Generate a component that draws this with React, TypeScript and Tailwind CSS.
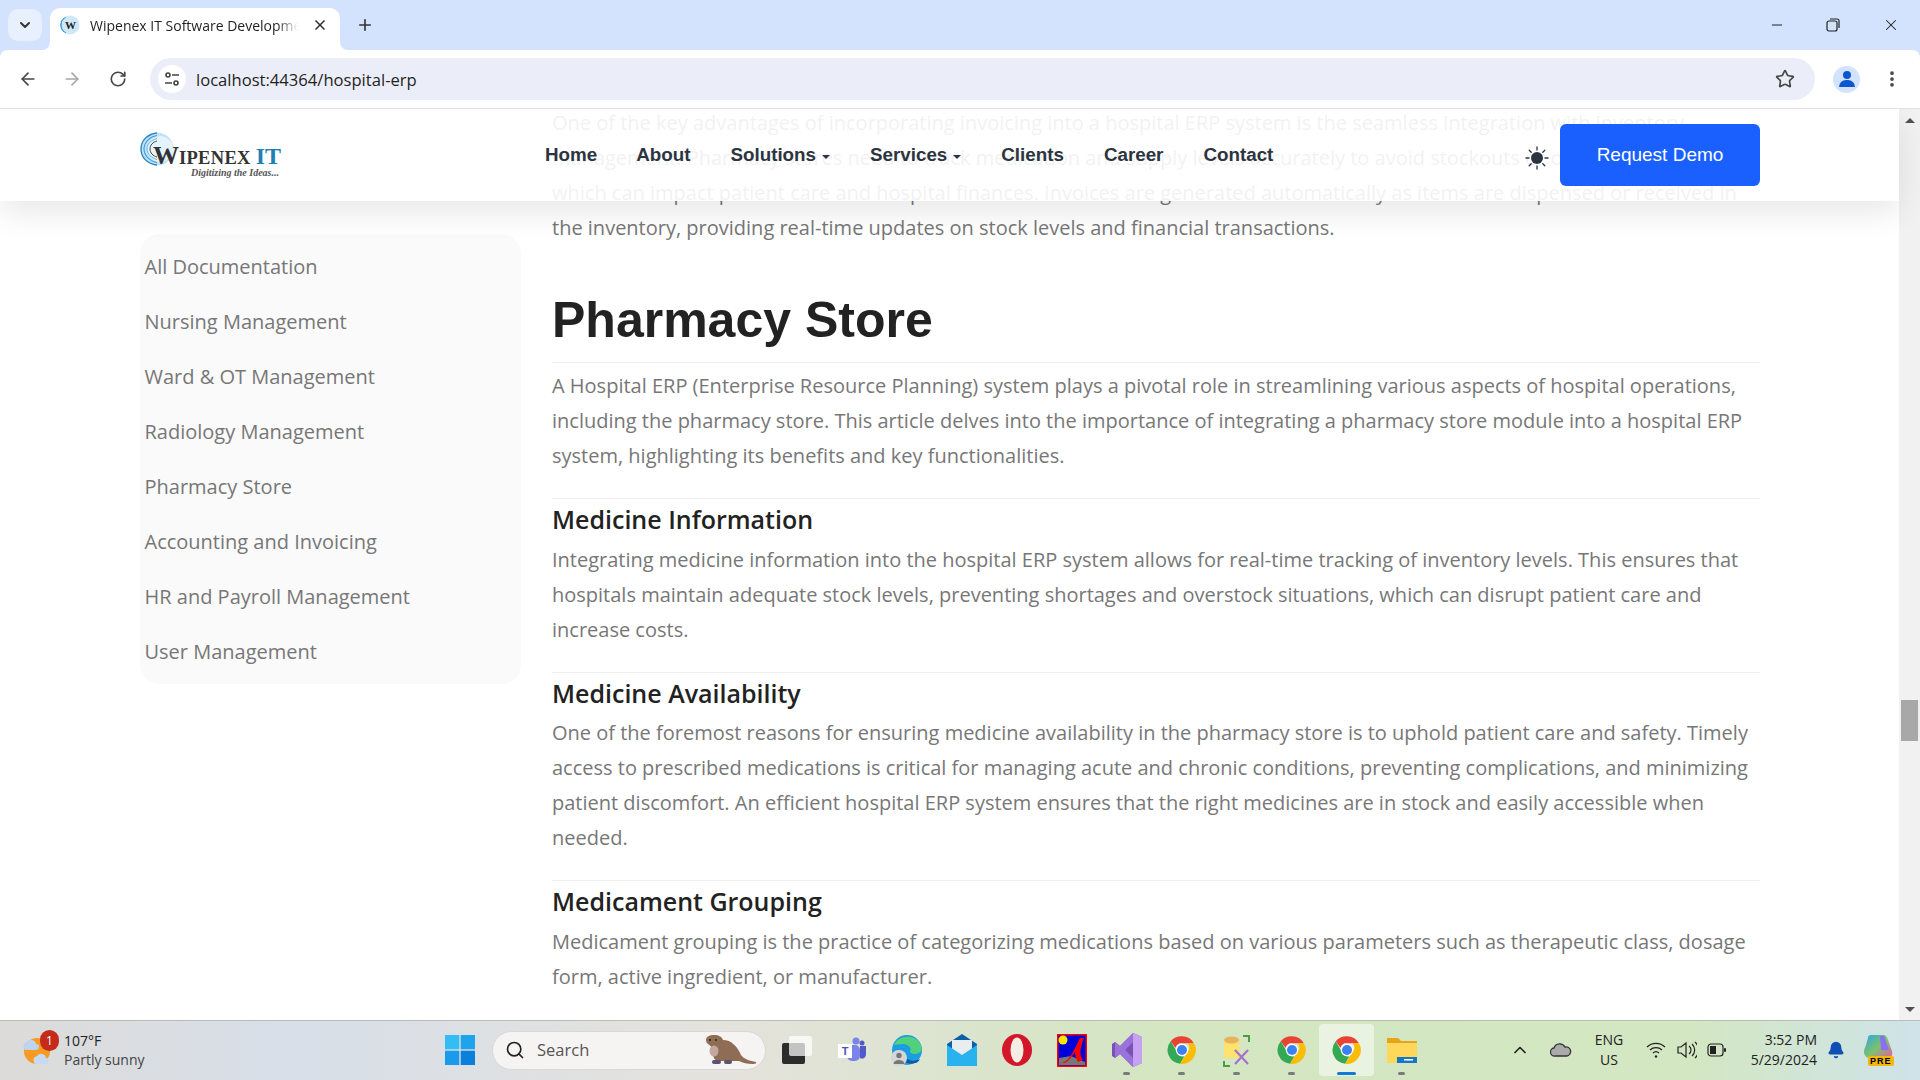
import { ArrowLeft, ArrowRight, RotateCw, Star, X, Plus, ChevronDown, Search, Minus, EllipsisVertical, ChevronUp, Bell } from "lucide-react";

const sideLinks = [
  "All Documentation",
  "Nursing Management",
  "Ward & OT Management",
  "Radiology Management",
  "Pharmacy Store",
  "Accounting and Invoicing",
  "HR and Payroll Management",
  "User Management",
];

const sections = [
  {
    title: "Medicine Information",
    text: "Integrating medicine information into the hospital ERP system allows for real-time tracking of inventory levels. This ensures that hospitals maintain adequate stock levels, preventing shortages and overstock situations, which can disrupt patient care and increase costs.",
  },
  {
    title: "Medicine Availability",
    text: "One of the foremost reasons for ensuring medicine availability in the pharmacy store is to uphold patient care and safety. Timely access to prescribed medications is critical for managing acute and chronic conditions, preventing complications, and minimizing patient discomfort. An efficient hospital ERP system ensures that the right medicines are in stock and easily accessible when needed.",
  },
  {
    title: "Medicament Grouping",
    text: "Medicament grouping is the practice of categorizing medications based on various parameters such as therapeutic class, dosage form, active ingredient, or manufacturer.",
  },
];

function Chrome({ size = 30 }: { size?: number }) {
  return (
    <svg width={size} height={size} viewBox="0 0 48 48">
      <path d="M24 2a22 22 0 0 1 19 11H24a11 11 0 0 0-10.5 7.5L6 10A22 22 0 0 1 24 2z" fill="#ea4335" />
      <path d="M6 10l9.5 16.5a11 11 0 0 0 12 8L21 46A22 22 0 0 1 6 10z" fill="#34a853" />
      <path d="M43 13a22 22 0 0 1-22 33l10-16.500A11 11 0 0 0 33 13z" fill="#fbbc04" />
      <circle cx="24" cy="24" r="10" fill="#fff" />
      <circle cx="24" cy="24" r="8" fill="#3b82f0" />
    </svg>
  );
}

function Favicon() {
  return (
    <svg width="20" height="20" viewBox="0 0 20 20">
      <circle cx="10" cy="10" r="9.500" fill="#cfe8f8" />
      <path d="M6 2a9 9 0 0 0 0 16M4 3a9 9 0 0 0 0 14" stroke="#3f9bd6" fill="none" />
      <text x="10.500" y="14" textAnchor="middle" fontSize="11" fontWeight="700" fontFamily="'Liberation Serif', serif" fill="#222">W</text>
    </svg>
  );
}

function Logo() {
  return (
    <div className="relative w-[142px] h-[46px] shrink-0">
      <svg width="34" height="34" viewBox="0 0 34 34" className="absolute left-0 top-0">
        <circle cx="17" cy="17" r="16.500" fill="#bfe2f8" />
        <circle cx="20" cy="17" r="13" fill="#e4f3fc" />
        <path d="M17 1C7 2 1 9 1 17s6 15 16 16" stroke="#2b84bd" strokeWidth="1.300" fill="none" />
        <path d="M17 3.500C9 5 4 11 4 17s5 12 13 13.500" stroke="#3f9bd6" strokeWidth="1.100" fill="none" />
        <path d="M17 6.500C11 8 7 12 7 17s4 9 10 10.500" stroke="#66b5e6" strokeWidth="1" fill="none" />
        <path d="M17 9c-4 1-7 4-7 8s3 7 7 8" stroke="#444" strokeWidth="1" fill="none" />
      </svg>
      <div className="absolute left-[13px] top-[11px] whitespace-nowrap font-['Liberation_Serif',serif] font-bold text-[#333] leading-[26px]">
        <span className="text-[26px]">W</span>
        <span className="text-[18.500px] tracking-[0.3px]">IPENEX </span>
        <span className="text-[24px] text-[#1f7fb5]">IT</span>
      </div>
      <div className="absolute right-[3px] top-[36px] whitespace-nowrap font-['Liberation_Serif',serif] italic font-bold text-[10px] leading-[10px] text-[#555]">
        Digitizing the Ideas...
      </div>
    </div>
  );
}

function NavItem({ label, caret }: { label: string; caret?: boolean }) {
  return (
    <span className="flex items-center gap-[6px] text-[18.800px] font-bold text-[#2b3440] whitespace-nowrap font-['Liberation_Sans',sans-serif]">
      {label}
      {caret && <span className="mt-[3px] border-x-[4.500px] border-t-[4px] border-x-transparent border-t-[#2b3440]" />}
    </span>
  );
}

function Sun() {
  return (
    <svg width="24" height="24" viewBox="0 0 24 24" stroke="#2b3440" strokeWidth="1.300" strokeLinecap="round">
      <circle cx="12" cy="12" r="6" fill="#2b3440" stroke="none" />
      <path d="M12 1v3M12 20v3M1 12h3M20 12h3M4.200 4.200l2 2M17.800 17.800l2 2M4.200 19.800l2-2M17.800 6.200l2-2" />
    </svg>
  );
}

function Teams() {
  return (
    <svg width="30" height="30" viewBox="0 0 30 30">
      <circle cx="19" cy="6" r="3.500" fill="#7b83eb" />
      <circle cx="25" cy="8" r="2.500" fill="#5059c9" />
      <rect x="10" y="10" width="13" height="16" rx="5" fill="#7b83eb" />
      <path d="M23 11h6v8a4 4 0 0 1-6 4z" fill="#5059c9" />
      <rect x="1" y="9" width="14" height="14" fill="#fff" />
      <text x="8" y="20" textAnchor="middle" fontSize="11" fontWeight="700" fontFamily="'Liberation Sans', sans-serif" fill="#4b53bc">T</text>
    </svg>
  );
}

function Edge() {
  return (
    <svg width="32" height="34" viewBox="0 0 32 34">
      <circle cx="16" cy="17" r="15" fill="#1b9de2" />
      <path d="M3 12C6 3 24-1 30 12c2 5-1 9-6 9-3 0-5-1-5-3 2-3-2-7-7-7-4 0-7 1-9 1z" fill="#52d17c" />
      <path d="M9 24c3 5 9 8 15 6 2 0 4-2 5-4-6 3-12 2-16-3z" fill="#0c59a4" />
      <circle cx="8" cy="25" r="8" fill="#d6d6d6" />
      <circle cx="8" cy="22.500" r="2.700" fill="#777" />
      <path d="M2.500 31a5.500 4 0 0 1 11 0z" fill="#777" />
    </svg>
  );
}

function Mail() {
  return (
    <svg width="30" height="32" viewBox="0 0 30 32">
      <path d="M15 0l15 10v22H0V10z" fill="#0f5ea8" />
      <path d="M5 6h20v10l-10 6-10-6z" fill="#e8edf2" />
      <path d="M0 11l15 10 15-10v21H0z" fill="#29b3ee" />
    </svg>
  );
}

function Opera() {
  return (
    <svg width="30" height="32" viewBox="0 0 30 32">
      <ellipse cx="15" cy="16" rx="15" ry="16" fill="#d3162a" />
      <ellipse cx="15" cy="16" rx="6.500" ry="12.500" fill="#f4eee2" />
    </svg>
  );
}

function XApp() {
  return (
    <svg width="30" height="33" viewBox="0 0 30 33">
      <rect x="0" y="0" width="30" height="33" fill="#f00" />
      <rect x="1.500" y="1.500" width="27" height="30" fill="#0000d8" />
      <circle cx="6" cy="6" r="4.500" fill="#ffe600" />
      <path d="M2 24l12-2 14 6v3H2z" fill="#777" />
      <path d="M5 29c8-2 13-15 18-25l4 0c-4 10-5 17-1 22l-5 2c-2-3-3-7-3-10-3 4-6 9-10 11z" fill="#f00" />
    </svg>
  );
}

function VisualStudio() {
  return (
    <svg width="30" height="34" viewBox="0 0 30 34">
      <path d="M21 0l9 4v26l-9 4-13-13-5 4-3-2V11l3-2 5 4z" fill="#7a52b3" />
      <path d="M21 0l9 4v26l-9 4z" fill="#c7a2f2" />
      <path d="M21 0v34L8 21l-5 4V9l5 4zM21 9l-8 8 8 8z" fill="#9b72dc" fillRule="evenodd" />
    </svg>
  );
}

function Tool() {
  return (
    <svg width="30" height="33" viewBox="0 0 30 33">
      <path d="M2 7c0-5 15-5 15 0v17H2z" fill="#ffe36e" />
      <ellipse cx="9.500" cy="6" rx="7.500" ry="3.500" fill="#e8b35c" />
      <path d="M21 2h6v6M2 27v5h6" stroke="#4a9c46" strokeWidth="2" fill="none" />
      <path d="M13 16l13 14M26 16L13 30" stroke="#a472c8" strokeWidth="2.200" />
    </svg>
  );
}

function Folder() {
  return (
    <svg width="32" height="28" viewBox="0 0 32 28">
      <path d="M1 2h11l3 3h16v21H1z" fill="#e5a51a" />
      <rect x="1" y="7" width="30" height="20" fill="#ffd75a" />
      <path d="M11 27v-6h20v6z" fill="#1478c8" />
      <rect x="18" y="23" width="9" height="1.500" fill="#fff" />
    </svg>
  );
}

function TaskIcon({ children, dot, active }: { children: React.ReactNode; dot?: boolean; active?: boolean }) {
  return (
    <div className={"relative w-[55px] h-[52px] flex items-center justify-center rounded-[4px] shrink-0 " + (active ? "bg-white/50" : "")}>
      {children}
      {dot && <span className="absolute bottom-[1px] left-[24px] w-[7px] h-[3px] rounded-full bg-[#7b7b7b]" />}
      {active && <span className="absolute bottom-[1px] left-[18px] w-[19px] h-[3px] rounded-full bg-[#0f7bd6]" />}
    </div>
  );
}

function Otter() {
  return (
    <svg width="52" height="30" viewBox="0 0 52 30">
      <path d="M1 5c0-3 3-5 8-5s8 2 9 5c8 0 14 6 18 15 3 4 9 6 15 7 1 1-1 2-3 2-6 0-10-1-14-3H14c-4 0-6-3-6-8 0-4-1-6-5-9-1-1-2-2-2-4z" fill="#8f6d55" />
      <circle cx="5" cy="5" r="1" fill="#222" />
      <circle cx="11" cy="5" r="1" fill="#222" />
      <ellipse cx="9" cy="16" rx="4.500" ry="5.500" fill="#c4a8a0" />
      <rect x="7" y="25" width="9" height="4" rx="2" fill="#5a5470" />
      <rect x="19" y="25" width="8" height="4" rx="2" fill="#5a5470" />
    </svg>
  );
}

function Weather() {
  return (
    <svg width="36" height="36" viewBox="0 0 36 36">
      <circle cx="15" cy="19" r="13" fill="#f59a23" />
      <path d="M2 16a4 4 0 0 1 3-6 5 5 0 0 1 9 2 3 3 0 0 1 0 6H4a2 2 0 0 1-2-2z" fill="#bcd4ee" />
      <path d="M12 30a4 4 0 0 1 3-6 5 5 0 0 1 9 2 3 3 0 0 1 0 6H14a2 2 0 0 1-2-2z" fill="#c6dbf2" />
    </svg>
  );
}

function Copilot() {
  return (
    <div className="relative w-[32px] h-[32px]">
      <svg width="32" height="28" viewBox="0 0 32 28">
        <defs>
          <linearGradient id="cp" x1="0" y1="0" x2="1" y2="1">
            <stop offset="0" stopColor="#2aa6e8" />
            <stop offset=".5" stopColor="#7ec26a" />
            <stop offset="1" stopColor="#e85aa8" />
          </linearGradient>
        </defs>
        <path d="M9 1h12c3 0 4 2 5 5l4 11c1 4-1 8-5 8H10c-4 0-8-3-8-7 0-3 1-4 2-7l2-7c0-2 1-3 3-3z" fill="url(#cp)" />
        <path d="M18 2h4l5 14h-8z" fill="#8a6ff0" />
      </svg>
      <span className="absolute left-[6px] bottom-0 px-[2px] rounded-[2px] bg-[#f5b70f] text-[9px] leading-[10px] font-bold tracking-[1px] text-black font-['Liberation_Sans',sans-serif]">PRE</span>
    </div>
  );
}

export default function App() {
  return (
    <div className="w-[1920px] h-[1080px] overflow-hidden flex flex-col font-['Open_Sans',sans-serif] bg-white">
      {/* tab strip */}
      <div className="h-[50px] shrink-0 bg-[#d3e3fd] flex items-start">
        <div className="ml-[8px] mt-[9px] w-[34px] h-[32px] rounded-[10px] bg-[#e8effd] flex items-center justify-center">
          <ChevronDown size={16} strokeWidth={3} className="text-[#333]" />
        </div>
        <div className="relative ml-[8px] mt-[8px] w-[290px] h-[42px] rounded-t-[10px] bg-white flex items-center pl-[10px] pb-[8px]">
          <span className="absolute -left-[8px] bottom-0 w-[8px] h-[8px] bg-white">
            <span className="block w-[8px] h-[8px] rounded-br-[8px] bg-[#d3e3fd]" />
          </span>
          <span className="absolute -right-[8px] bottom-0 w-[8px] h-[8px] bg-white">
            <span className="block w-[8px] h-[8px] rounded-bl-[8px] bg-[#d3e3fd]" />
          </span>
          <Favicon />
          <span className="ml-[10px] w-[208px] overflow-hidden whitespace-nowrap text-[14px] text-[#1f1f1f] [mask-image:linear-gradient(to_right,black_90%,transparent)]">
            Wipenex IT Software Development
          </span>
          <X size={16} strokeWidth={2.500} className="ml-[14px] text-[#333]" />
        </div>
        <Plus size={18} strokeWidth={2.200} className="ml-[16px] mt-[16px] text-[#333]" />
        <div className="ml-auto flex items-center mt-[16px] text-[#222]">
          <Minus size={16} strokeWidth={1.500} />
          <svg width="14" height="14" viewBox="0 0 14 14" fill="none" stroke="#222" strokeWidth="1.200" className="ml-[41px]">
            <rect x="1" y="3" width="10" height="10" rx="2" />
            <path d="M4 1h7a2 2 0 0 1 2 2v7" />
          </svg>
          <X size={18} strokeWidth={1.400} className="ml-[42px] mr-[20px]" />
        </div>
      </div>

      {/* toolbar */}
      <div className="shrink-0 bg-[#d3e3fd]">
        <div className="h-[59px] bg-white border-b border-[#e2e2e2] flex items-center rounded-t-[8px]">
          <ArrowLeft size={20} strokeWidth={2} className="ml-[18px] text-[#474747]" />
          <ArrowRight size={20} strokeWidth={2} className="ml-[24px] text-[#a8a8a8]" />
          <RotateCw size={18} strokeWidth={2.200} className="ml-[27px] text-[#474747]" />
          <div className="ml-[23px] w-[1665px] h-[42px] rounded-full bg-[#ebeef8] flex items-center pl-[8px] pr-[20px]">
            <div className="w-[28px] h-[28px] rounded-full bg-white flex items-center justify-center">
              <svg width="16" height="16" viewBox="0 0 16 16" fill="none" stroke="#444" strokeWidth="1.600">
                <circle cx="4" cy="4" r="2" />
                <path d="M8 4h7M1 12h7" />
                <circle cx="12" cy="12" r="2" />
              </svg>
            </div>
            <span className="ml-[10px] text-[16.600px] text-[#1f1f1f] translate-y-[1px]">localhost:44364/hospital-erp</span>
            <Star size={20} strokeWidth={2} className="ml-auto text-[#474747]" />
          </div>
          <div className="ml-[18px] w-[27px] h-[27px] rounded-full bg-[#d3e3fd] flex flex-col items-center justify-center">
            <span className="w-[8px] h-[8px] rounded-full bg-[#0b57d0]" />
            <span className="mt-[1px] w-[16px] h-[7px] rounded-t-[7px] bg-[#0b57d0]" />
          </div>
          <EllipsisVertical size={20} strokeWidth={2.500} className="ml-[22px] text-[#474747]" />
        </div>
      </div>

      {/* page */}
      <div className="relative flex-1 min-h-0 flex overflow-hidden">
        <div className="flex-1 min-w-0 flex items-start overflow-hidden">
          <aside className="ml-[140px] mt-[125px] w-[381px] shrink-0 rounded-[20px] bg-[#fafafa] py-[5px] pl-[4.500px]">
            {sideLinks.map((link) => (
              <div key={link} className="h-[55px] flex items-center text-[20px] text-[#777]">{link}</div>
            ))}
          </aside>
          <main className="ml-[31px] w-[1208px] shrink-0 -mt-[4px] text-[20px] leading-[35px] text-[#777]">
            <p>
              One of the key advantages of incorporating invoicing into a hospital ERP system is the seamless integration with inventory management. Pharmacy stores need to track medication and supply levels accurately to avoid stockouts or overstock situations, which can impact patient care and hospital finances. Invoices are generated automatically as items are dispensed or received in the inventory, providing real-time updates on stock levels and financial transactions.
            </p>
            <h2 className="mt-[45px] pb-[12px] border-b border-[#eee] font-['Liberation_Sans',sans-serif] font-bold text-[50px] leading-[60px] text-[#222]">
              Pharmacy Store
            </h2>
            <p className="mt-[5px] mb-[25px]">
              A Hospital ERP (Enterprise Resource Planning) system plays a pivotal role in streamlining various aspects of hospital operations, including the pharmacy store. This article delves into the importance of integrating a pharmacy store module into a hospital ERP system, highlighting its benefits and key functionalities.
            </p>
            {sections.map((s) => (
              <section key={s.title} className="border-t border-[#eee] mb-[25px]">
                <h3 className="pt-[3px] pb-[5.500px] text-[25px] leading-[34px] font-semibold text-[#222]">{s.title}</h3>
                <p>{s.text}</p>
              </section>
            ))}
          </main>
        </div>

        {/* scrollbar */}
        <div className="w-[21px] shrink-0 bg-[#f1f1f1] flex flex-col items-center">
          <span className="mt-[9px] border-x-[5px] border-b-[5px] border-x-transparent border-b-[#505050]" />
          <span className="mt-[577px] w-[17px] h-[41px] bg-[#a8a8a8]" />
          <span className="mt-[266px] border-x-[5px] border-t-[5px] border-x-transparent border-t-[#505050]" />
        </div>

        {/* fixed navbar */}
        <header className="absolute left-0 top-0 right-[21px] h-[92px] bg-white/90 shadow-[0_12px_30px_rgba(0,0,0,0.09)] flex items-center pl-[140px] pr-[139px]">
          <Logo />
          <nav className="ml-[263px] flex items-center">
            <NavItem label="Home" />
            <span className="ml-[39px]"><NavItem label="About" /></span>
            <span className="ml-[40px]"><NavItem label="Solutions" caret /></span>
            <span className="ml-[40px]"><NavItem label="Services" caret /></span>
            <span className="ml-[40px]"><NavItem label="Clients" /></span>
            <span className="ml-[40px]"><NavItem label="Career" /></span>
            <span className="ml-[40px]"><NavItem label="Contact" /></span>
          </nav>
          <span className="ml-auto translate-y-[3px]"><Sun /></span>
          <button className="ml-[11px] w-[200px] h-[62px] rounded-[6px] bg-[#1a5fff] text-white text-[19px] font-['Liberation_Sans',sans-serif]">
            Request Demo
          </button>
        </header>
      </div>

      {/* taskbar */}
      <div className="h-[60px] shrink-0 border-t border-[#b9bdb6] pb-[1px] flex items-center bg-[linear-gradient(90deg,#dcdbd9_0%,#d8dfe9_15%,#e4e2dc_38%,#d4e6c2_60%,#d3e7c2_88%,#cfe3ea_100%)]">
        <div className="w-[432px] shrink-0 flex items-center pl-[22px]">
          <div className="relative w-[42px] h-[40px] flex items-center">
            <Weather />
            <span className="absolute left-[18px] top-0 w-[19px] h-[21px] rounded-full bg-[#c42b1c] text-white text-[12px] leading-[21px] text-center">1</span>
          </div>
          <div className="text-[14px] leading-[19px] text-[#222]">
            <div>107°F</div>
            <div className="text-[#444]">Partly sunny</div>
          </div>
        </div>
        <TaskIcon>
          <svg width="30" height="30" viewBox="0 0 30 30">
            <rect x="0" y="0" width="14.300" height="14.300" fill="#33bdf5" />
            <rect x="15.700" y="0" width="14.300" height="14.300" fill="#1ea3ec" />
            <rect x="0" y="15.700" width="14.300" height="14.300" fill="#1a9aea" />
            <rect x="15.700" y="15.700" width="14.300" height="14.300" fill="#0a7fdc" />
          </svg>
        </TaskIcon>
        <div className="ml-[5px] w-[274px] h-[39px] shrink-0 rounded-full bg-[#f6f4f2] border border-[#d8d8d8] flex items-center pl-[12px] pr-[8px]">
          <Search size={20} strokeWidth={2} className="text-[#222]" />
          <span className="ml-[12px] text-[16.500px] text-[#555]">Search</span>
          <span className="ml-auto"><Otter /></span>
        </div>
        <div className="ml-[3px] flex items-center">
          <TaskIcon>
            <svg width="30" height="28" viewBox="0 0 30 28">
              <rect x="0" y="7" width="23" height="21" rx="2" fill="#2c2c2c" />
              <rect x="7" y="0" width="23" height="20" rx="2" fill="#fff" fillOpacity="0.72" />
            </svg>
          </TaskIcon>
          <TaskIcon><Teams /></TaskIcon>
          <TaskIcon><Edge /></TaskIcon>
          <TaskIcon><Mail /></TaskIcon>
          <TaskIcon><Opera /></TaskIcon>
          <TaskIcon><XApp /></TaskIcon>
          <TaskIcon dot><VisualStudio /></TaskIcon>
          <TaskIcon dot><Chrome /></TaskIcon>
          <TaskIcon dot><Tool /></TaskIcon>
          <TaskIcon dot><Chrome /></TaskIcon>
          <TaskIcon active><Chrome /></TaskIcon>
          <TaskIcon dot><Folder /></TaskIcon>
        </div>
        <div className="ml-[81px] flex items-center text-[#222]">
          <ChevronUp size={20} strokeWidth={2} />
          <svg width="22" height="14" viewBox="0 0 22 14" className="ml-[20px]">
            <path d="M5 13a4 4 0 0 1-1-8 6 6 0 0 1 11-1 4.500 4.500 0 0 1 2 9z" fill="#aaa" stroke="#333" strokeWidth="1.300" />
          </svg>
          <div className="ml-[21px] w-[32px] text-[14px] leading-[20px] text-center">ENG<br />US</div>
          <svg width="20" height="18" viewBox="0 0 20 18" fill="none" stroke="#222" strokeWidth="1.300" className="ml-[21px]">
            <path d="M1 6a13 13 0 0 1 18 0M4 9a9 9 0 0 1 12 0M7 12a4.500 4.500 0 0 1 6 0" />
            <circle cx="10" cy="15.500" r="1.200" fill="#222" stroke="none" />
          </svg>
          <svg width="20" height="18" viewBox="0 0 20 18" fill="none" stroke="#222" strokeWidth="1.200" className="ml-[11px]">
            <path d="M1 6h3l5-4v14l-5-4H1zM12 5a5 5 0 0 1 0 8M15 3a8 8 0 0 1 0 12M18 1a11 11 0 0 1 0 16" />
          </svg>
          <svg width="20" height="14" viewBox="0 0 20 14" className="ml-[10px]">
            <rect x="1" y="1" width="15" height="12" rx="3" fill="none" stroke="#222" strokeWidth="1.200" />
            <rect x="3" y="3" width="6" height="8" fill="#222" />
            <rect x="17" y="5" width="2" height="4" rx="1" fill="#222" />
          </svg>
          <div className="ml-[10px] w-[80px] text-[14px] leading-[20px] text-right whitespace-nowrap">3:52 PM<br />5/29/2024</div>
          <Bell size={18} fill="#0f4fb5" stroke="#0f4fb5" className="ml-[10px]" />
          <span className="ml-[17px]"><Copilot /></span>
        </div>
      </div>
    </div>
  );
}
